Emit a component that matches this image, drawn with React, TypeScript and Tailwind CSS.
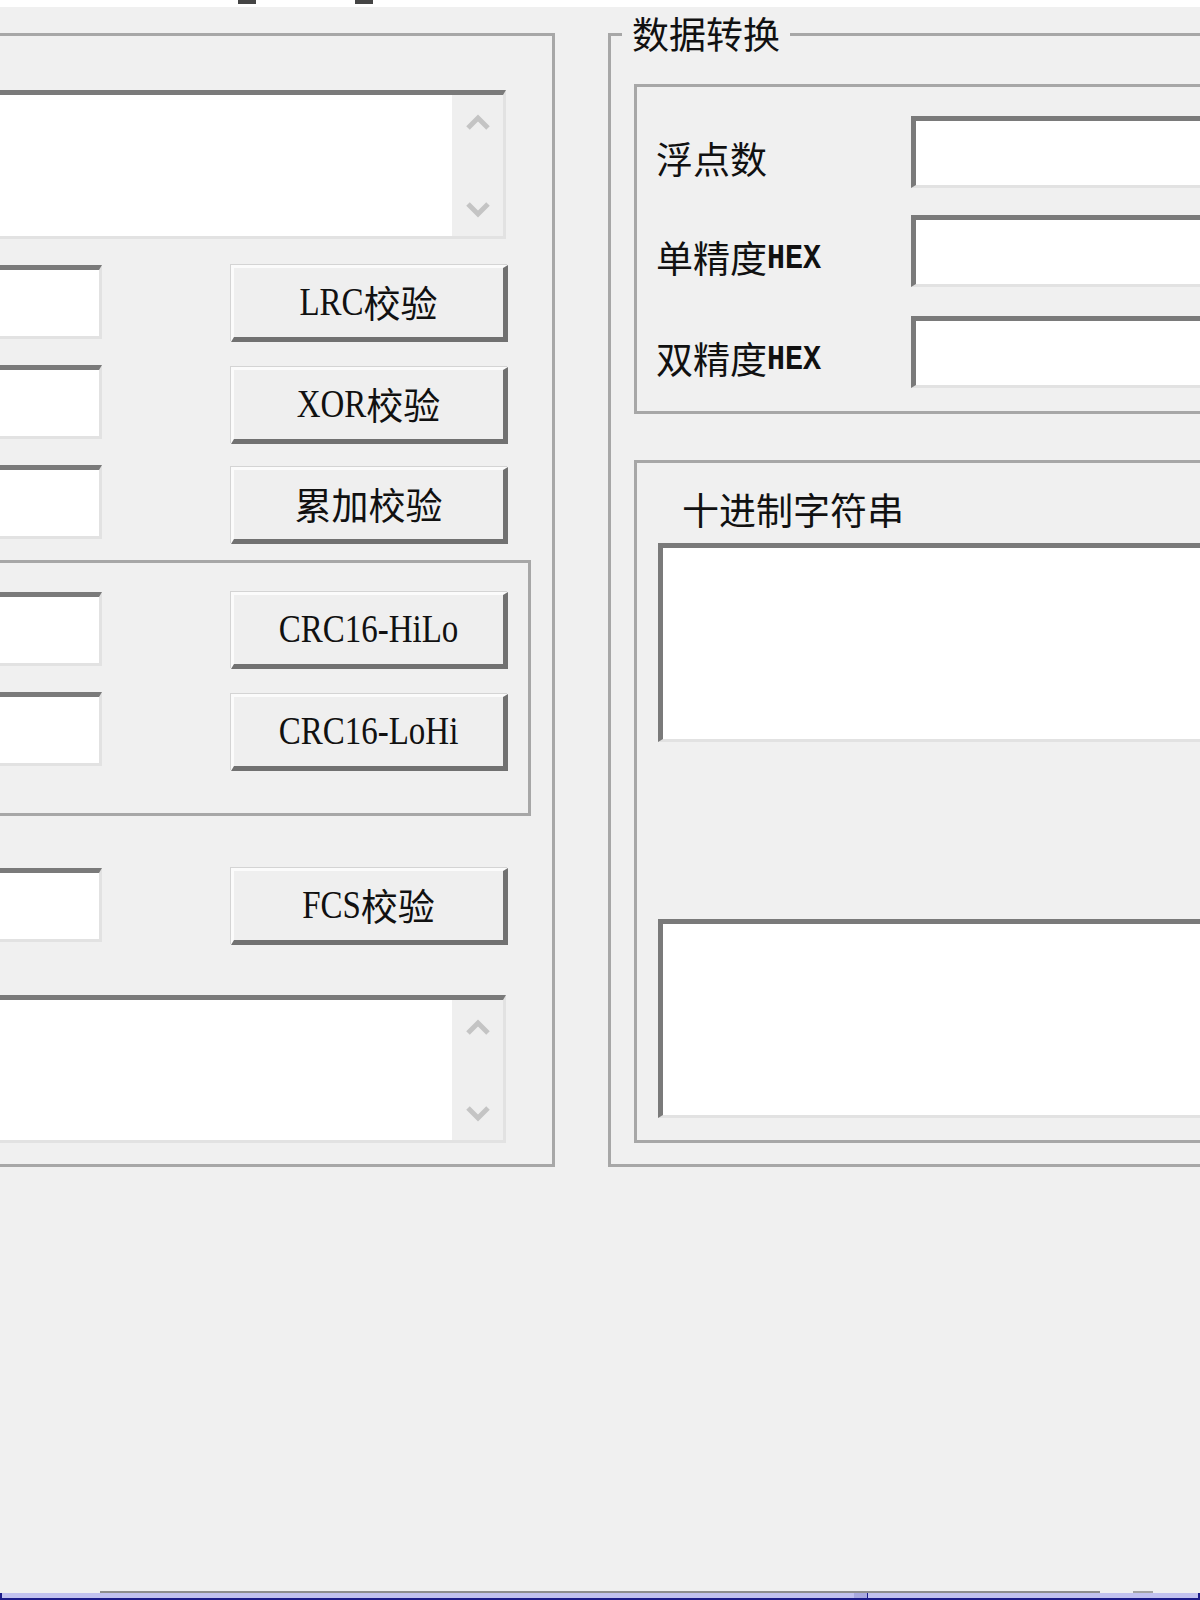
import { ReactNode } from "react";

const cjk = "font-['Noto_Sans_CJK_SC','Noto_Sans',sans-serif]";
const serif = "font-['Liberation_Serif','DejaVu_Serif',serif]";
const mono = "font-['Liberation_Mono','DejaVu_Sans_Mono',monospace]";

function Chevron({ up }: { up?: boolean }) {
  return (
    <svg width="26" height="16" viewBox="0 0 26 16" className="block">
      <path
        d={up ? "M3 14 L13 4 L23 14" : "M3 2 L13 12 L23 2"}
        fill="none"
        stroke="#c4c4c4"
        strokeWidth="5"
      />
    </svg>
  );
}

// sunken edit box, open on one side because the window cuts it
function Edit({ className = "" }: { className?: string }) {
  return (
    <div
      className={`bg-white border-t-[5px] border-t-[#7a7a7a] border-b-[3px] border-b-[#e2e2e2] ${className}`}
    />
  );
}

function MemoBox({ className = "" }: { className?: string }) {
  return (
    <div
      className={`flex w-[506px] bg-white border-t-[5px] border-t-[#7a7a7a] border-b-[3px] border-b-[#e2e2e2] border-r-[3px] border-r-[#e2e2e2] ${className}`}
    >
      <div className="flex-1" />
      <div className="flex w-[51px] flex-col items-center bg-[#efefef] pt-[19px] pb-[18px] justify-between">
        <Chevron up />
        <Chevron />
      </div>
    </div>
  );
}

function Btn({ children, className = "" }: { children: ReactNode; className?: string }) {
  return (
    <div
      className={`flex h-[77px] w-[277px] items-center justify-center bg-[#efefef] border-t-[3px] border-l-[3px] border-t-[#fbfbfb] border-l-[#fbfbfb] border-r-[5px] border-b-[5px] border-r-[#717171] border-b-[#717171] shadow-[-1px_-1px_0_#d4d4d4] text-[#111] ${className}`}
    >
      {children}
    </div>
  );
}

const L = ({ t }: { t: string }) => (
  <span className={`${serif} inline-block scale-y-[1.2] text-[33px] leading-none`}>{t}</span>
);
const C = ({ t }: { t: string }) => <span className={`${cjk} text-[37px] leading-none`}>{t}</span>;

function CheckRow({ children, className = "" }: { children: ReactNode; className?: string }) {
  return (
    <div className={`flex h-[77px] shrink-0 items-start justify-between ${className}`}>
      <Edit className="h-[74px] w-[102px] border-r-[3px] border-r-[#e2e2e2]" />
      {children}
    </div>
  );
}

function FieldRow({ label, hex, className = "" }: { label: string; hex?: boolean; className?: string }) {
  return (
    <div className={`flex h-[72px] items-center ${className}`}>
      <div className="flex w-[255px] items-end pt-[12px] text-[#111]">
        <span className={`${cjk} text-[37px] leading-none`}>{label}</span>
        {hex && (
          <span className={`${mono} inline-block scale-y-[1.15] text-[30px] font-bold leading-none pb-[2px]`}>
            HEX
          </span>
        )}
      </div>
      <Edit className="h-[72px] flex-1 border-l-[5px] border-l-[#7a7a7a]" />
    </div>
  );
}

export default function App() {
  return (
    <div className="flex h-[1600px] w-[1200px] flex-col overflow-hidden bg-[#f0f0f0]">
      {/* strip of the window above */}
      <div className="flex h-[7px] shrink-0 bg-white">
        <div className="w-[238px]" />
        <div className="h-[4px] w-[18px] bg-[#454545]" />
        <div className="w-[99px]" />
        <div className="h-[4px] w-[18px] bg-[#454545]" />
      </div>

      <div className="mt-[26px] flex shrink-0 items-start">
        {/* checksum group */}
        <div className="flex h-[1134px] w-[555px] flex-col border-t-[3px] border-r-[3px] border-b-[3px] border-[#a7a7a7] pr-[44px]">
          <MemoBox className="mt-[54px] h-[149px]" />

          <CheckRow className="mt-[26px]">
            <Btn>
              <L t="LRC" />
              <C t="校验" />
            </Btn>
          </CheckRow>
          <CheckRow className="mt-[23px]">
            <Btn className="mt-[2px]">
              <L t="XOR" />
              <C t="校验" />
            </Btn>
          </CheckRow>
          <CheckRow className="mt-[23px]">
            <Btn className="mt-[2px]">
              <C t="累加校验" />
            </Btn>
          </CheckRow>

          <div className="mt-[18px] flex h-[256px] w-[531px] flex-col border-t-[3px] border-r-[3px] border-b-[3px] border-[#a7a7a7] pt-[29px] pr-[20px]">
            <CheckRow>
              <Btn>
                <L t="CRC16-HiLo" />
              </Btn>
            </CheckRow>
            <CheckRow className="mt-[23px]">
              <Btn className="mt-[2px]">
                <L t="CRC16-LoHi" />
              </Btn>
            </CheckRow>
          </div>

          <CheckRow className="mt-[52px]">
            <Btn>
              <L t="FCS" />
              <C t="校验" />
            </Btn>
          </CheckRow>

          <MemoBox className="mt-[50px] h-[148px]" />
        </div>

        {/* data conversion group */}
        <div className="ml-[53px] flex h-[1134px] flex-1 flex-col border-t-[3px] border-l-[3px] border-b-[3px] border-[#a7a7a7] pl-[23px]">
          <div className={`-mt-[21px] -ml-[12px] w-fit bg-[#f0f0f0] px-[10px] ${cjk} text-[37px] leading-none text-[#111]`}>
            数据转换
          </div>

          <div className="mt-[32px] flex h-[330px] flex-col border-t-[3px] border-l-[3px] border-b-[3px] border-[#a7a7a7] pt-[29px] pl-[19px]">
            <FieldRow label="浮点数" />
            <FieldRow label="单精度" hex className="mt-[27px]" />
            <FieldRow label="双精度" hex className="mt-[29px]" />
          </div>

          <div className="mt-[46px] flex h-[683px] flex-col border-t-[3px] border-l-[3px] border-b-[3px] border-[#a7a7a7] pt-[28px] pl-[21px]">
            <div className={`ml-[24px] ${cjk} text-[37px] leading-none text-[#111]`}>十进制字符串</div>
            <Edit className="mt-[15px] h-[199px] border-l-[5px] border-l-[#7a7a7a]" />
            <Edit className="mt-[177px] h-[199px] border-l-[5px] border-l-[#7a7a7a]" />
          </div>
        </div>
      </div>

      <div className="flex-1" />

      {/* status strip at the bottom */}
      <div className="flex h-[2px] shrink-0">
        <div className="w-[100px]" />
        <div className="w-[1000px] bg-[#8e8e8e]" />
        <div className="w-[33px]" />
        <div className="w-[20px] bg-[#a4a4a4]" />
      </div>
      <div className="flex h-[5px] shrink-0 border-l-2 border-r-2 border-[#1c1c8a] bg-[#c2c2f0]">
        <div className="w-[852px]" />
        <div className="w-[13px] bg-[#a9a9e0]" />
        <div className="w-[1px] bg-[#1c1c8a]" />
      </div>
      <div className="h-[2px] shrink-0 bg-[#1c1c8a]" />
    </div>
  );
}
